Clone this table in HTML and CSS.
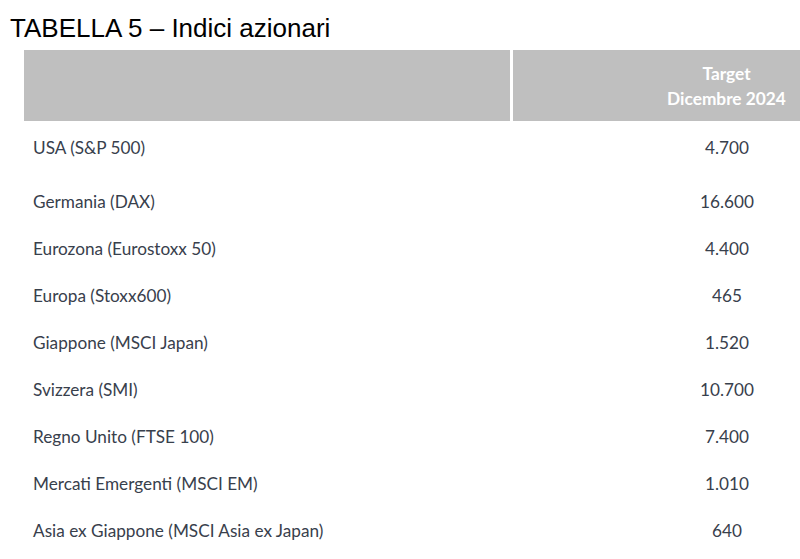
FILE: index.html
```html
<!DOCTYPE html>
<html>
<head>
<meta charset="utf-8">
<link rel="stylesheet" href="styles.css">
</head>
<body>
<h1 class="title">TABELLA 5 – Indici azionari</h1>
<div class="table">
  <div class="head">
    <div class="hcell hleft"></div>
    <div class="hcell hright">Target<br>Dicembre 2024</div>
  </div>
  <div class="row first"><div class="name">USA (S&amp;P 500)</div><div class="val">4.700</div></div>
  <div class="row"><div class="name">Germania (DAX)</div><div class="val">16.600</div></div>
  <div class="row"><div class="name">Eurozona (Eurostoxx 50)</div><div class="val">4.400</div></div>
  <div class="row"><div class="name">Europa (Stoxx600)</div><div class="val">465</div></div>
  <div class="row"><div class="name">Giappone (MSCI Japan)</div><div class="val">1.520</div></div>
  <div class="row"><div class="name">Svizzera (SMI)</div><div class="val">10.700</div></div>
  <div class="row"><div class="name">Regno Unito (FTSE 100)</div><div class="val">7.400</div></div>
  <div class="row"><div class="name">Mercati Emergenti (MSCI EM)</div><div class="val">1.010</div></div>
  <div class="row"><div class="name">Asia ex Giappone (MSCI Asia ex Japan)</div><div class="val">640</div></div>
</div>
</body>
</html>
```
FILE: styles.css
```css
html, body {
  margin: 0;
  padding: 0;
  background: #fff;
  overflow: hidden;
}
body {
  width: 800px;
  height: 559px;
}
.title {
  margin: 0;
  padding: 13px 0 0 10px;
  height: 38px;
  box-sizing: border-box;
  font-family: "Liberation Sans", Arial, sans-serif;
  font-weight: normal;
  font-size: 26px;
  line-height: 30px;
  color: #000;
}
.table {
  margin-left: 24px;
  width: 776px;
  font-family: Lato, "Open Sans", sans-serif;
  color: #38404c;
}
.head {
  display: flex;
  height: 71px;
  margin-top: 12px;
}
.hcell {
  background: #bfbfbf;
}
.hleft {
  width: 486px;
}
.hright {
  margin-left: 3px;
  flex: 1;
  color: #fff;
  font-weight: bold;
  font-size: 17.3px;
  line-height: 25px;
  padding-top: 11px;
  padding-left: 140px;
  text-align: center;
  box-sizing: border-box;
  width: 287px;
}
.row {
  display: flex;
  height: 47px;
  box-sizing: border-box;
  padding-top: 15px;
  font-size: 17.2px;
  line-height: 20px;
}
.row.first {
  height: 56px;
  padding-top: 17px;
}
.name {
  width: 489px;
  padding-left: 9px;
  box-sizing: border-box;
}
.val {
  width: 256px;
  padding-left: 172px;
  box-sizing: border-box;
  text-align: center;
  white-space: nowrap;
}
```
